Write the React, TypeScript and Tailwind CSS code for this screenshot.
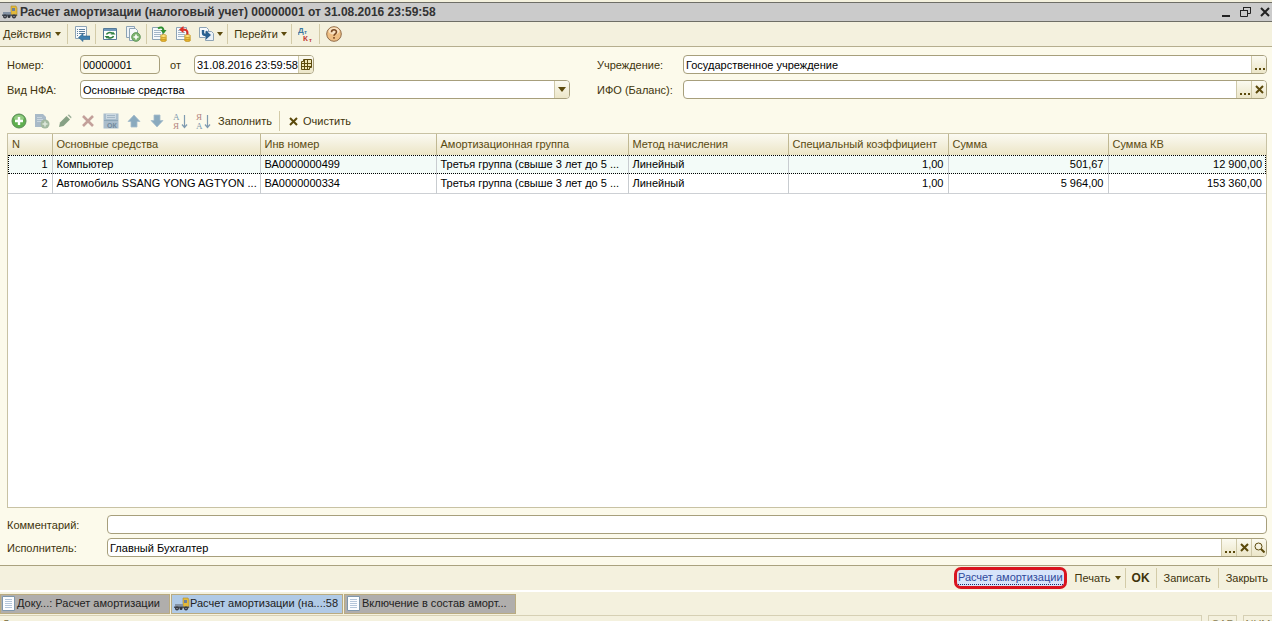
import type {ReactNode} from "react";

type Row = {
    n: number;
    name: string;
    inventory: string;
    group: string;
    method: string;
    factor: string;
    sum: string;
    sumKv: string;
};

const rows: Row[] = [
    {n: 1, name: "Компьютер", inventory: "ВА0000000499", group: "Третья группа (свыше 3 лет до 5 ...", method: "Линейный", factor: "1,00", sum: "501,67", sumKv: "12 900,00"},
    {n: 2, name: "Автомобиль SSANG YONG AGTYON ...", inventory: "ВА0000000334", group: "Третья группа (свыше 3 лет до 5 ...", method: "Линейный", factor: "1,00", sum: "5 964,00", sumKv: "153 360,00"},
];

const columns = ["N", "Основные средства", "Инв номер", "Амортизационная группа", "Метод начисления", "Специальный коэффициент", "Сумма", "Сумма КВ"];

function Truck() {
    return (
        <svg width="16" height="16" viewBox="0 0 16 16" className="shrink-0">
            <path d="M9 2h5l1 2v8H9z" fill="#e2b93b" stroke="#b08a2a" strokeWidth=".6"/>
            <path d="M10 4h3v3h-3z" fill="#6d7f96"/>
            <path d="M1 8h8v3H1z" fill="#8492a4"/>
            <path d="M0 10.500h15v1.500H0z" fill="#4d5561"/>
            <circle cx="3" cy="12.500" r="2" fill="#30343b"/>
            <circle cx="7" cy="12.500" r="1.500" fill="#30343b"/>
            <circle cx="12" cy="12.500" r="2" fill="#30343b"/>
            <circle cx="3" cy="12.500" r=".7" fill="#aab"/>
            <circle cx="12" cy="12.500" r=".7" fill="#aab"/>
        </svg>
    );
}

function Sheet({children}: { children?: ReactNode }) {
    return (
        <svg width="16" height="16" viewBox="0 0 16 16" className="shrink-0">
            <path d="M1.500 1.500h10v12h-10z" fill="#f7fafc" stroke="#8da3b5"/>
            <path d="M3 4.500h7M3 6.500h7M3 8.500h7M3 10.500h7" stroke="#a3b6c8"/>
            {children}
        </svg>
    );
}

function Coins() {
    return (
        <g stroke="#b98a18" strokeWidth=".7">
            <ellipse cx="12.500" cy="14" rx="3" ry="1.500" fill="#e6b32e"/>
            <ellipse cx="12.500" cy="12" rx="3" ry="1.500" fill="#f2c848"/>
            <ellipse cx="12.500" cy="10" rx="3" ry="1.500" fill="#ffe27a"/>
        </g>
    );
}

function TabSheet() {
    return (
        <svg width="13" height="15" viewBox="0 0 13 15" className="shrink-0">
            <path d="M.5.5h12v14H.5z" fill="#fbfdff" stroke="#7e97ab"/>
            <path d="M3 3.500h7M3 5.500h7M3 7.500h7M3 9.500h7M3 11.500h7" stroke="#b4c6da"/>
        </svg>
    );
}

function Arrow() {
    return (
        <svg width="6" height="4" viewBox="0 0 6 4" className="shrink-0">
            <path d="M0 0h6L3 4z" fill="#5c4a0c"/>
        </svg>
    );
}

function Cross() {
    return (
        <svg width="9" height="9" viewBox="0 0 9 9" className="shrink-0">
            <path d="M1 1l7 7M8 1L1 8" stroke="#5c4a0c" strokeWidth="2"/>
        </svg>
    );
}

function Dots() {
    return (
        <svg width="11" height="17" viewBox="0 0 11 17">
            <path d="M1 12h2v2H1zM5 12h2v2H5zM9 12h2v2H9z" fill="#5c4a0c"/>
        </svg>
    );
}

function Separator() {
    return <span className="h-5 w-px shrink-0 bg-[#d3cba8]"/>;
}

function IconButton({label, children}: { label: string, children: ReactNode }) {
    return (
        <button type="button" aria-label={label} className="flex h-5 shrink-0 items-center justify-center gap-[3px]">
            {children}
        </button>
    );
}

function FieldButton({label, children}: { label: string, children: ReactNode }) {
    return (
        <button
            type="button"
            aria-label={label}
            className="flex w-[15px] shrink-0 items-center justify-center overflow-hidden border-l border-[#cfc9a9] bg-linear-to-b from-[#fbfaf0] to-[#ece6c8]"
        >
            {children}
        </button>
    );
}

type FieldProps = {
    id: string;
    value: string;
    className?: string;
    readOnly?: boolean;
    children?: ReactNode;
};

function Field({id, value, className = "flex-1", readOnly, children}: FieldProps) {
    return (
        <div className={`flex h-[19px] min-w-0 overflow-hidden rounded-[4px] border border-[#a79f7c] ${readOnly ? "bg-[#fcfaeb]" : "bg-white"} ${className}`}>
            <input id={id} type="text" defaultValue={value} readOnly={readOnly} className="w-0 min-w-0 flex-1 pt-0.5 pl-0.5 text-black outline-none"/>
            {children}
        </div>
    );
}

function MainToolbar() {
    return (
        <div className="flex h-[25px] shrink-0 items-center border-b border-[#b5ae8e] bg-[#f4f1de] pl-[3px]">
            <button type="button" className="flex items-center gap-1">Действия <Arrow/></button>
            <span className="w-1.5"/>
            <Separator/>
            <span className="w-1.5"/>
            <IconButton label="Найти в списке">
                <svg width="16" height="16" viewBox="0 0 16 16">
                    <path d="M1.500.5h11v12h-11z" fill="#f7fafc" stroke="#8da3b5"/>
                    <path d="M3 3.500h1m1 0h6M3 5.500h1m1 0h6M3 7.500h1m1 0h6M3 9.500h1" stroke="#5d7f9c"/>
                    <path d="M4.500 11.500L9 7.500V10h7v3.500H9v2z" fill="#3f7fae" stroke="#2c628c" strokeWidth=".6"/>
                </svg>
            </IconButton>
            <span className="w-[5px]"/>
            <Separator/>
            <span className="w-1.5"/>
            <IconButton label="Обновить">
                <svg width="16" height="16" viewBox="0 0 16 16">
                    <path d="M1.500 2.500h13v11h-13z" fill="#fff" stroke="#557a99"/>
                    <path d="M2 3h12v2H2z" fill="#6f98ba"/>
                    <path d="M4.500 8.500a3.500 2.500 0 0 1 5.500-1.500M11.500 10a3.500 2.500 0 0 1-5.500 1.500" fill="none" stroke="#2f8040" strokeWidth="1.500"/>
                    <path d="M8.500 8.500h5L11 5.800zM7.500 10h-5L5 12.800z" fill="#2f8040"/>
                </svg>
            </IconButton>
            <span className="w-[7px]"/>
            <IconButton label="Скопировать">
                <svg width="16" height="16" viewBox="0 0 16 16">
                    <path d="M1.500.5h8v11h-8z" fill="#eef3f7" stroke="#8da3b5"/>
                    <path d="M4.500 2.500h6l2 2v10h-8z" fill="#f7fafc" stroke="#8da3b5"/>
                    <circle cx="11" cy="11" r="4.400" fill="#7db472" stroke="#4f8a4a" strokeWidth=".7"/>
                    <path d="M11 8.500v5M8.500 11h5" stroke="#fff" strokeWidth="1.600"/>
                </svg>
            </IconButton>
            <span className="w-[5px]"/>
            <Separator/>
            <span className="w-1"/>
            <IconButton label="Провести">
                <Sheet>
                    <Coins/>
                    <path d="M7 2.500c3-2 5-1 5.500 1.500" fill="none" stroke="#2f8f2f" strokeWidth="2"/>
                    <path d="M9.500 4h6L12.500 8z" fill="#2f8f2f"/>
                </Sheet>
            </IconButton>
            <span className="w-2"/>
            <IconButton label="Отменить проведение">
                <Sheet>
                    <Coins/>
                    <path d="M12.500 8.500c.5-4-1-5-5-5" fill="none" stroke="#dc2f25" strokeWidth="2"/>
                    <path d="M8.500 0v7L4 3.500z" fill="#dc2f25"/>
                </Sheet>
            </IconButton>
            <span className="w-2"/>
            <IconButton label="Ввести на основании">
                <svg width="15" height="16" viewBox="0 0 15 16">
                    <path d="M.5 1.500h7l2 2v8h-9z" fill="#f7fafc" stroke="#8da3b5"/>
                    <path d="M6.500 5.500h6l2 2v7h-8z" fill="#eaf1f7" stroke="#8da3b5"/>
                    <path d="M4 4v3c0 1.500 1 2 3 2" fill="none" stroke="#2b6291" strokeWidth="2.400"/>
                    <path d="M7 4.500l5 4.500-5 4.500z" fill="#2b6291"/>
                </svg>
                <Arrow/>
            </IconButton>
            <span className="w-1"/>
            <Separator/>
            <span className="w-1.5"/>
            <button type="button" className="flex items-center gap-[3px]">Перейти <Arrow/></button>
            <span className="w-1"/>
            <Separator/>
            <span className="w-1.5"/>
            <IconButton label="Результат проведения">
                <svg width="16" height="16" viewBox="0 0 16 16" fontFamily="Liberation Sans, sans-serif" fontWeight="700">
                    <text x="0" y="7" fontSize="8" fill="#3c78a0">Д</text>
                    <text x="6" y="8" fontSize="6" fill="#3c78a0">т</text>
                    <text x="5" y="15" fontSize="8" fill="#c0392f">К</text>
                    <text x="11" y="16" fontSize="6" fill="#c0392f">т</text>
                </svg>
            </IconButton>
            <span className="w-[5px]"/>
            <Separator/>
            <span className="w-1.5"/>
            <IconButton label="Справка">
                <svg width="16" height="16" viewBox="0 0 16 16">
                    <circle cx="8" cy="8" r="7.300" fill="#efbf84" stroke="#8f6a48"/>
                    <ellipse cx="8" cy="5" rx="5.500" ry="3.500" fill="#fae3c3"/>
                    <path d="M5.500 6.200C5.500 3 10.500 3 10.500 6c0 1.800-2.500 1.900-2.500 3.800M8 11v1.800" fill="none" stroke="#7a4a24" strokeWidth="1.600"/>
                </svg>
            </IconButton>
        </div>
    );
}

function SortIcon({top, bottom, topColor, bottomColor}: { top: string, bottom: string, topColor: string, bottomColor: string }) {
    return (
        <svg width="16" height="18" viewBox="0 0 16 18" fontFamily="Liberation Serif, serif">
            <text x="1" y="8" fontSize="9" fill={topColor}>{top}</text>
            <text x="1" y="17" fontSize="9" fill={bottomColor}>{bottom}</text>
            <path d="M12.500 3v12M10 12.500l2.500 3 2.500-3" fill="none" stroke="#7f9bb0" strokeWidth="1.200"/>
        </svg>
    );
}

function TableToolbar() {
    return (
        <div className="flex h-6 items-center gap-[7px] pl-1">
            <IconButton label="Добавить">
                <svg width="16" height="16" viewBox="0 0 16 16">
                    <circle cx="8" cy="8" r="7" fill="#5fae4e" stroke="#5b8c58"/>
                    <ellipse cx="8" cy="5" rx="5" ry="3" fill="#92cb82"/>
                    <path d="M8 4v8M4 8h8" stroke="#fff" strokeWidth="2.400"/>
                </svg>
            </IconButton>
            <IconButton label="Скопировать строку">
                <svg width="16" height="16" viewBox="0 0 16 16">
                    <path d="M1 1h8l3 3v10H1z" fill="#a9bac8"/>
                    <path d="M3 4.500h5M3 6.500h6M3 8.500h5" stroke="#c9d5de"/>
                    <circle cx="11" cy="11" r="4.500" fill="#a3b9a0"/>
                    <path d="M11 8.500v5M8.500 11h5" stroke="#dfe9dc" strokeWidth="1.500"/>
                </svg>
            </IconButton>
            <IconButton label="Изменить">
                <svg width="16" height="16" viewBox="0 0 16 16">
                    <path d="M2 14l1-4.500L9.500 3l3.500 3.500L6.500 13z" fill="#87a185"/>
                    <path d="M10.500 2L12 1.500 14.500 4 14 5.500z" fill="#9aaf98"/>
                </svg>
            </IconButton>
            <IconButton label="Удалить">
                <svg width="16" height="16" viewBox="0 0 16 16">
                    <path d="M3 3l10 10M13 3L3 13" stroke="#c3a09a" strokeWidth="2.600"/>
                </svg>
            </IconButton>
            <IconButton label="Закончить редактирование">
                <svg width="16" height="16" viewBox="0 0 16 16">
                    <path d="M.5.5h15v15H.5z" fill="#a9bdcc"/>
                    <path d="M3 1h10v5H3z" fill="#cbd8e1"/>
                    <path d="M4 2.500h8M4 4.500h8" stroke="#a3b6c5"/>
                    <path d="M1 7.500h14" stroke="#8ea7b8"/>
                    <text x="4" y="15" fontSize="7" fontWeight="700" fontFamily="Liberation Sans, sans-serif" fill="#71899b">ОК</text>
                </svg>
            </IconButton>
            <IconButton label="Переместить вверх">
                <svg width="16" height="16" viewBox="0 0 16 16">
                    <path d="M8 2l6 6.500h-3V14H5V8.500H2z" fill="#8aaabe" stroke="#a6bccb" strokeWidth=".8"/>
                </svg>
            </IconButton>
            <IconButton label="Переместить вниз">
                <svg width="16" height="16" viewBox="0 0 16 16">
                    <path d="M8 14l6-6.500h-3V2H5v5.500H2z" fill="#8aaabe" stroke="#a6bccb" strokeWidth=".8"/>
                </svg>
            </IconButton>
            <IconButton label="Сортировать по возрастанию">
                <SortIcon top="А" bottom="Я" topColor="#7f9bb0" bottomColor="#b3857e"/>
            </IconButton>
            <IconButton label="Сортировать по убыванию">
                <SortIcon top="Я" bottom="А" topColor="#b3857e" bottomColor="#7f9bb0"/>
            </IconButton>
            <button type="button">Заполнить</button>
            <Separator/>
            <button type="button" className="flex items-center gap-[5px] pl-0.5"><Cross/>Очистить</button>
        </div>
    );
}

function AssetsTable() {
    const cell = "overflow-hidden whitespace-nowrap border-r border-[#c8ccd0] pl-1";
    return (
        <div className="flex-1 overflow-hidden border border-[#c8c2a4] bg-white">
            <table className="w-full table-fixed border-collapse text-left">
                <colgroup>
                    <col className="w-11"/>
                    <col className="w-[208px]"/>
                    <col className="w-[176px]"/>
                    <col className="w-[192px]"/>
                    <col className="w-[160px]"/>
                    <col className="w-[160px]"/>
                    <col className="w-[160px]"/>
                    <col className="w-[158px]"/>
                </colgroup>
                <thead>
                    <tr className="h-[21px] bg-linear-to-b from-[#fbfaf2] to-[#ece5c6] text-[#5a4a10]">
                        {columns.map((title) => (
                            <th key={title} scope="col" className="overflow-hidden border-r border-[#c0b893] pl-1 font-normal whitespace-nowrap last:border-r-0">{title}</th>
                        ))}
                    </tr>
                </thead>
                <tbody className="text-black">
                    {rows.map((row) => (
                        <tr
                            key={row.n}
                            className={row.n === 1
                                ? "h-[19px] bg-[#f3fbf8] outline-1 -outline-offset-1 outline-dotted outline-black"
                                : "h-[19px] border-b border-[#cdd0d4]"}
                        >
                            <td className={`${cell} pr-1 text-right`}>{row.n}</td>
                            <td className={cell}>{row.name}</td>
                            <td className={cell}>{row.inventory}</td>
                            <td className={cell}>{row.group}</td>
                            <td className={cell}>{row.method}</td>
                            <td className={`${cell} pr-1 text-right`}>{row.factor}</td>
                            <td className={`${cell} pr-1 text-right`}>{row.sum}</td>
                            <td className="overflow-hidden px-1 text-right whitespace-nowrap">{row.sumKv}</td>
                        </tr>
                    ))}
                </tbody>
            </table>
        </div>
    );
}

function Header() {
    return (
        <div className="grid grid-cols-[563fr_670fr] gap-x-[27px] gap-y-1.5">
            <div className="flex items-center">
                <label htmlFor="number" className="w-[73px] shrink-0 pt-0.5">Номер:</label>
                <Field id="number" value="00000001" className="w-20" readOnly/>
                <label htmlFor="date" className="w-[34px] pt-0.5 pl-2.5">от</label>
                <Field id="date" value="31.08.2016 23:59:58" className="w-[120px]">
                    <FieldButton label="Выбрать дату">
                        <svg width="11" height="11" viewBox="0 0 11 11">
                            <path d="M2.500.5h8v8h-2v2h-8v-8h2z" fill="#efe6b8" stroke="#5c4a0c"/>
                            <path d="M3.500 1v9M6.500 1v9M1 4.500h9M1 7.500h9" stroke="#5c4a0c"/>
                        </svg>
                    </FieldButton>
                </Field>
            </div>
            <div className="flex items-center">
                <label htmlFor="org" className="w-[86px] shrink-0 pt-0.5">Учреждение:</label>
                <Field id="org" value="Государственное учреждение">
                    <FieldButton label="Выбрать учреждение"><Dots/></FieldButton>
                </Field>
            </div>
            <div className="flex items-center">
                <label htmlFor="kind" className="w-[73px] shrink-0 pt-0.5">Вид НФА:</label>
                <Field id="kind" value="Основные средства">
                    <FieldButton label="Открыть список">
                        <svg width="8" height="5" viewBox="0 0 8 5"><path d="M0 0h8L4 5z" fill="#5c4a0c"/></svg>
                    </FieldButton>
                </Field>
            </div>
            <div className="flex items-center">
                <label htmlFor="ifo" className="w-[86px] shrink-0 pt-0.5">ИФО (Баланс):</label>
                <Field id="ifo" value="">
                    <FieldButton label="Выбрать ИФО"><Dots/></FieldButton>
                    <FieldButton label="Очистить ИФО"><Cross/></FieldButton>
                </Field>
            </div>
        </div>
    );
}

function BottomBar() {
    return (
        <div className="flex h-[25px] shrink-0 items-center justify-end border-t border-[#aaa27f] bg-[#f4f1de] pr-1">
            <button type="button" className="h-[22px] rounded-[7px] border-3 border-[#d9141f] bg-[#d7e4fa] px-px text-[#2f4a9c]">
                <span className="block border-b border-dotted border-[#1c2f6e]">Расчет амортизации</span>
            </button>
            <span className="w-2"/>
            <button type="button" className="flex items-center gap-1 pr-1">Печать <Arrow/></button>
            <Separator/>
            <button type="button" className="px-1.5 text-xs font-bold">OK</button>
            <Separator/>
            <button type="button" className="px-[7px]">Записать</button>
            <Separator/>
            <button type="button" className="pl-[7px]">Закрыть</button>
        </div>
    );
}

function WindowTabs() {
    const base = "flex h-5 items-center border border-[#b9ab80] text-[#222]";
    return (
        <div className="flex h-[25px] shrink-0 items-center gap-px border-t-2 border-white bg-[#f4f1de]">
            <button type="button" className={`${base} w-[170px] gap-0.5 bg-[#b0aeac] pl-px`}><TabSheet/>Доку...: Расчет амортизации</button>
            <button type="button" className={`${base} w-[172px] bg-[#b0cae6] pl-0.5`}><Truck/>Расчет амортизации (на...:58</button>
            <button type="button" className={`${base} w-[172px] gap-0.5 bg-[#b0aeac] pl-0.5`}><TabSheet/>Включение в состав аморт...</button>
        </div>
    );
}

export default function App() {
    return (
        <div className="flex h-screen flex-col overflow-hidden bg-[#f4f1de] pt-0.5 font-['Liberation_Sans',Arial,sans-serif] text-[11px] leading-[13px] text-[#40340c]">
            <header className="flex h-5 shrink-0 items-center border-y border-[#6e6e66] bg-[#cbcbcb] px-0.5 text-[#333]">
                <Truck/>
                <h1 className="flex-1 pl-0.5 text-xs font-bold">Расчет амортизации (налоговый учет) 00000001 от 31.08.2016 23:59:58</h1>
                <div className="flex items-center gap-2">
                    <button type="button" aria-label="Свернуть">
                        <svg width="12" height="12" viewBox="0 0 12 12"><path d="M2 9h8v2H2z" fill="#222"/></svg>
                    </button>
                    <button type="button" aria-label="Восстановить">
                        <svg width="12" height="12" viewBox="0 0 12 12" fill="none" stroke="#222">
                            <path d="M.5 4.500h7v6h-7zM3.500 4V1.500h7v6H8"/>
                            <path d="M0 4.500h8M3 1.500h8"/>
                        </svg>
                    </button>
                    <button type="button" aria-label="Закрыть окно">
                        <svg width="10" height="12" viewBox="0 0 10 12"><path d="M1 2l8 8M9 2l-8 8" stroke="#222" strokeWidth="2"/></svg>
                    </button>
                </div>
            </header>

            <MainToolbar/>

            <main className="flex min-h-0 flex-1 flex-col bg-[#fcfaeb] pt-2 pr-[5px] pb-2 pl-[7px]">
                <Header/>
                <div className="h-2.5 shrink-0"/>
                <TableToolbar/>
                <AssetsTable/>
                <div className="flex flex-col gap-1 pt-[7px]">
                    <div className="flex items-center">
                        <label htmlFor="comment" className="w-[100px] shrink-0 pt-0.5">Комментарий:</label>
                        <Field id="comment" value=""/>
                    </div>
                    <div className="flex items-center">
                        <label htmlFor="author" className="w-[100px] shrink-0 pt-0.5">Исполнитель:</label>
                        <Field id="author" value="Главный Бухгалтер">
                            <FieldButton label="Выбрать исполнителя"><Dots/></FieldButton>
                            <FieldButton label="Очистить исполнителя"><Cross/></FieldButton>
                            <FieldButton label="Открыть исполнителя">
                                <svg width="11" height="11" viewBox="0 0 11 11" fill="none" stroke="#5c4a0c">
                                    <circle cx="4.500" cy="4.500" r="3.500"/>
                                    <path d="M7 7l3.500 3.500" strokeWidth="2"/>
                                </svg>
                            </FieldButton>
                        </Field>
                    </div>
                </div>
            </main>

            <BottomBar/>
            <WindowTabs/>

            {/* status line, only its top edge fits in the window */}
            <footer className="flex h-1.5 shrink-0 gap-1.5 overflow-hidden text-[#8a7f55]">
                <div className="h-5 flex-1 border border-l-0 border-[#d6d0b4] pt-0.5 pl-0.5">Д</div>
                <div className="h-5 w-[29px] border border-[#d6d0b4] pt-0.5 text-center">CAP</div>
                <div className="h-5 w-[29px] border border-r-0 border-[#d6d0b4] pt-0.5 text-center">NUM</div>
            </footer>
        </div>
    );
}
